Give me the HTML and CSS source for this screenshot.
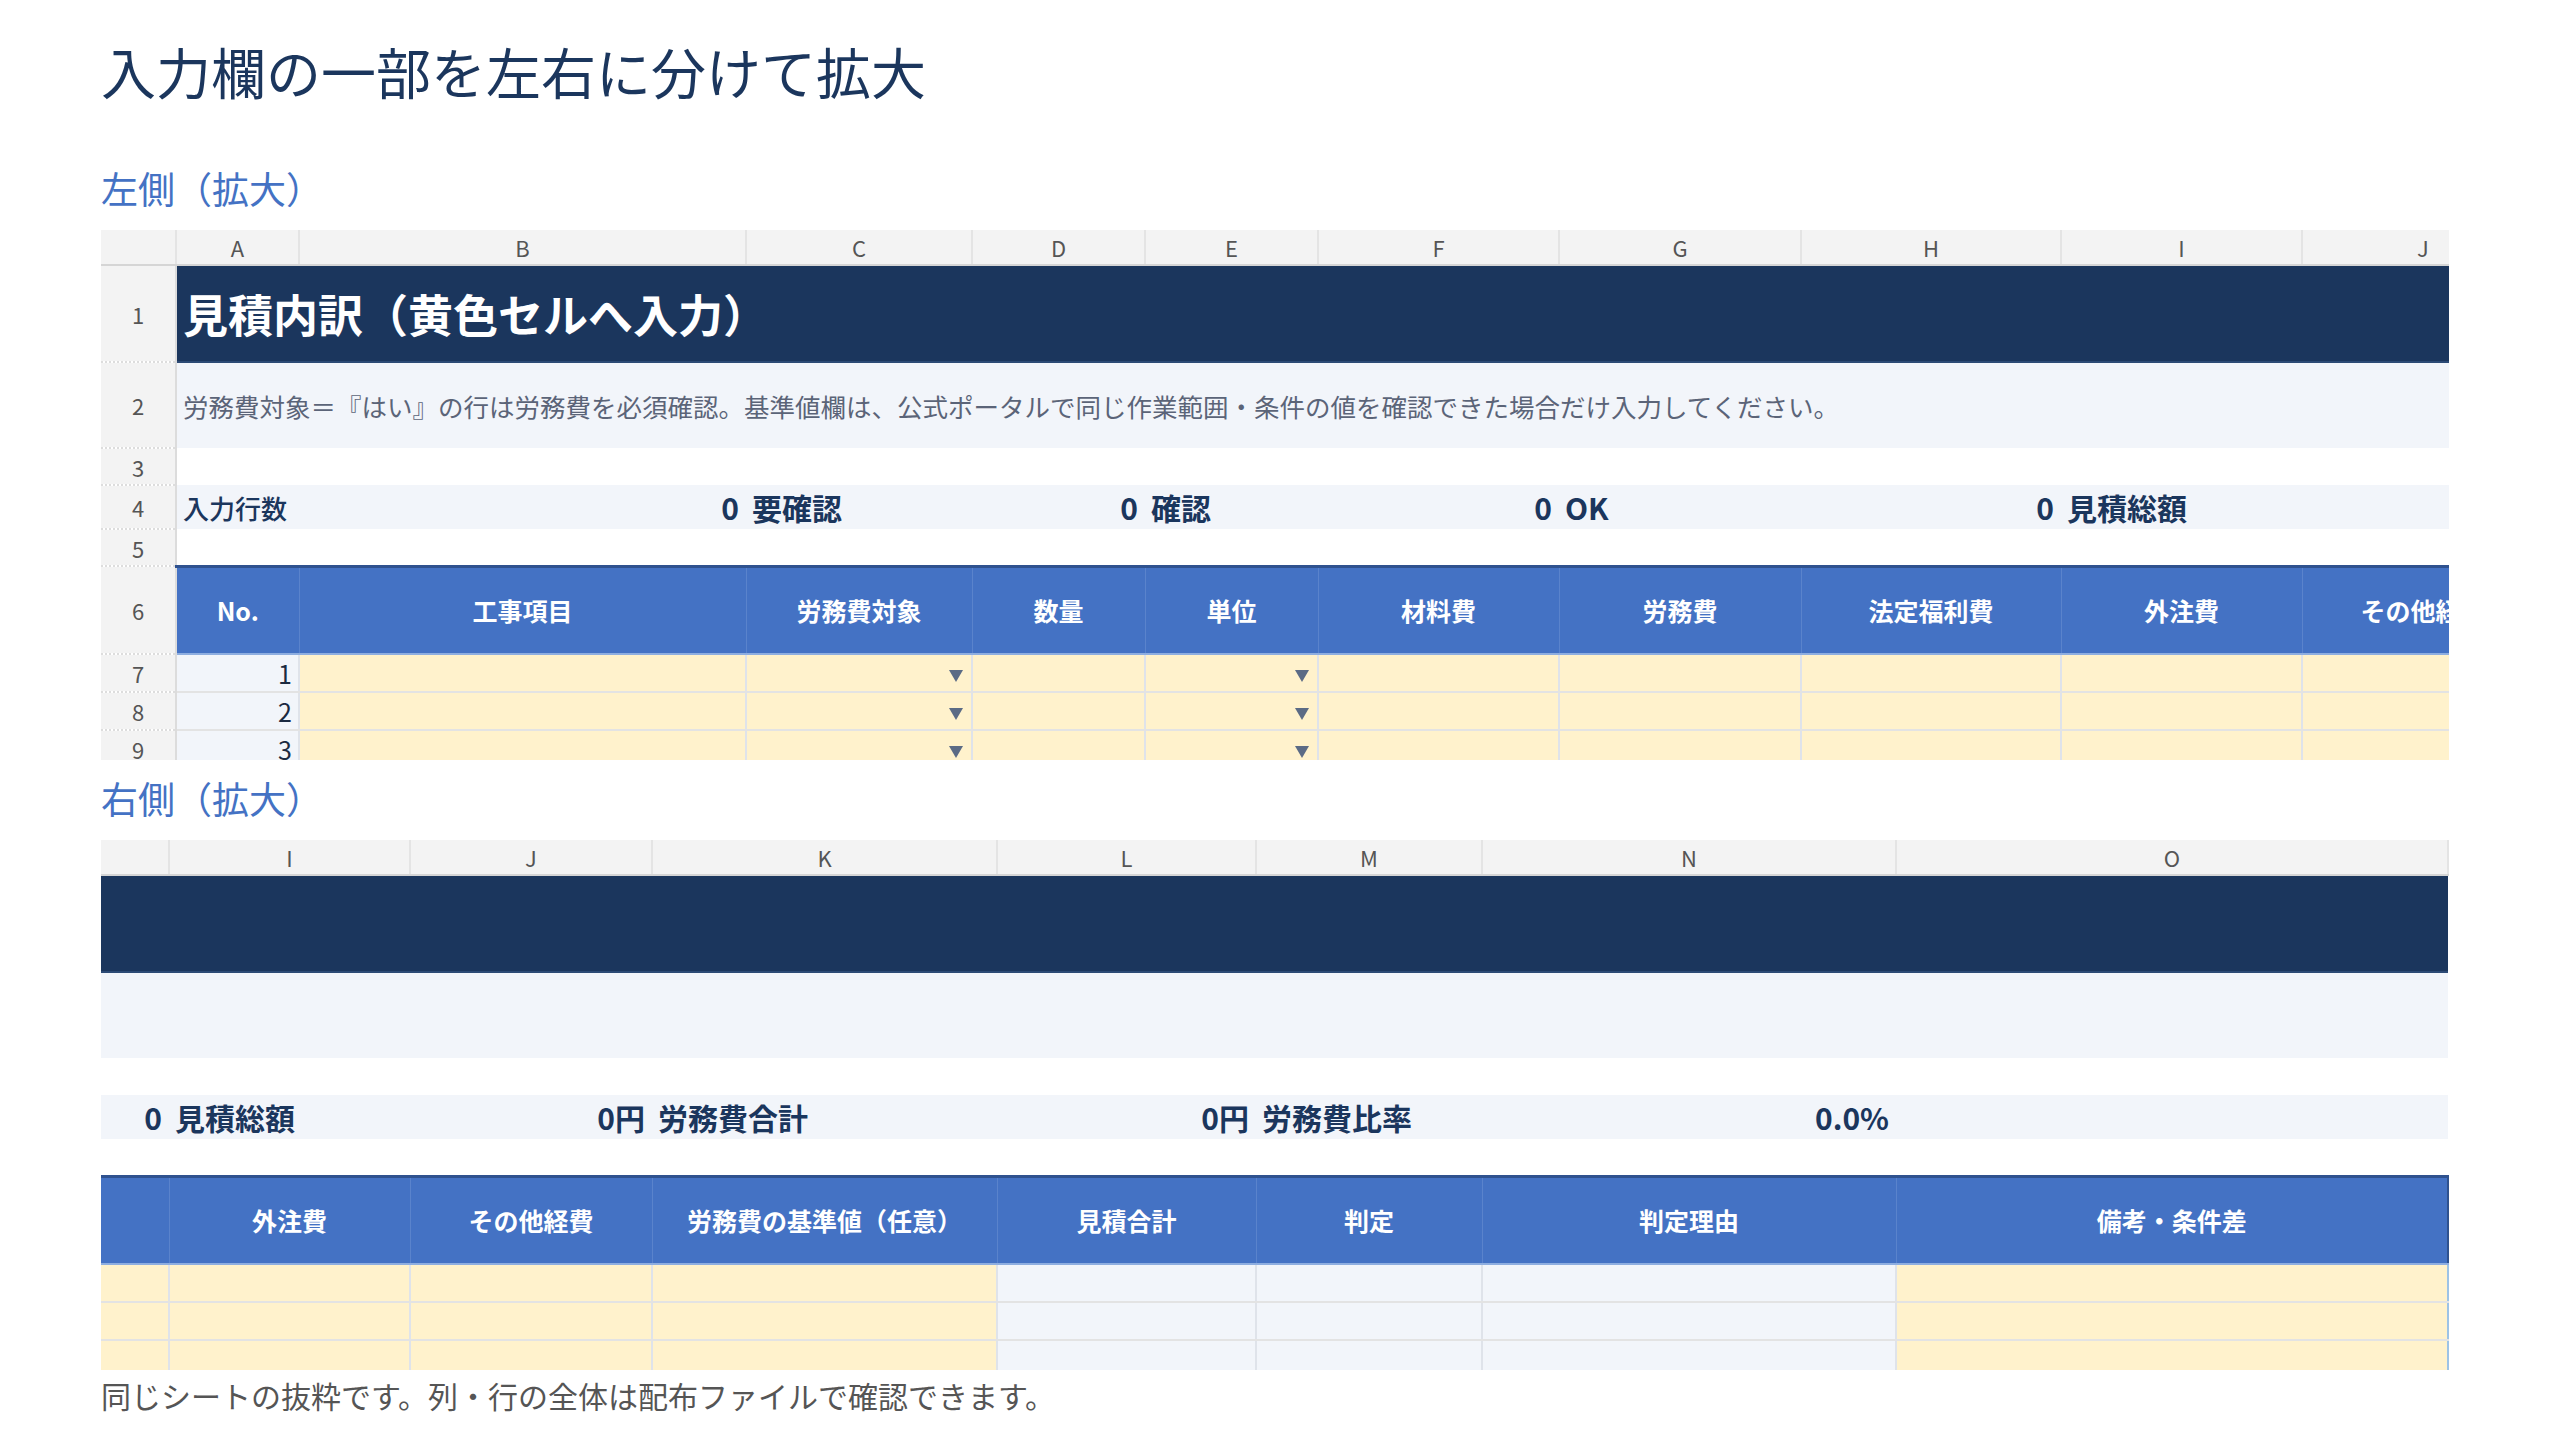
FILE: index.html
```html
<!DOCTYPE html>
<html lang="ja">
<head>
    <meta charset="UTF-8">
    <meta name="viewport" content="width=device-width, initial-scale=1.0">
    <title>入力欄の一部を左右に分けて拡大</title>
    <link rel="stylesheet" href="styles.css">
</head>
<body>
    <main class="page">
        <h1 class="page-title">入力欄の一部を左右に分けて拡大</h1>

        <section class="zoom-part">
            <h2 class="part-title">左側（拡大）</h2>
            <div class="sheet-view" id="view-left"></div>
        </section>

        <section class="zoom-part">
            <h2 class="part-title">右側（拡大）</h2>
            <div class="sheet-view" id="view-right"></div>
        </section>

        <p class="caption">同じシートの抜粋です。列・行の全体は配布ファイルで確認できます。</p>
    </main>

    <script>
        // column letter + width in px
        const COLS = [
            ['A', 123], ['B', 447], ['C', 226], ['D', 173], ['E', 173],
            ['F', 241], ['G', 242], ['H', 260], ['I', 241], ['J', 242],
            ['K', 345], ['L', 259], ['M', 226], ['N', 414], ['O', 552]
        ];
        const ROW_HEADER_WIDTH = 75;

        const NOTE = '労務費対象＝『はい』の行は労務費を必須確認。基準値欄は、公式ポータルで同じ作業範囲・条件の値を確認できた場合だけ入力してください。';

        // row 4: label / value pairs
        const SUMMARY = [
            ['入力行数', 'lead'], ['0', 'num'], ['要確認', 'label'], ['0', 'num'], ['確認', 'label'],
            ['0', 'num'], ['OK', 'label'], ['0', 'num'], ['見積総額', 'label'], ['0円', 'num'],
            ['労務費合計', 'label'], ['0円', 'num'], ['労務費比率', 'label'], ['0.0%', 'num'], ['', 'label']
        ];

        const FIELDS = [
            'No.', '工事項目', '労務費対象', '数量', '単位', '材料費', '労務費', '法定福利費',
            '外注費', 'その他経費', '労務費の基準値（任意）', '見積合計', '判定', '判定理由', '備考・条件差'
        ];

        // input = yellow entry cell, select = entry with dropdown, calc = formula result
        const KINDS = [
            'no', 'input', 'select', 'input', 'select', 'input', 'input', 'input',
            'input', 'input', 'input', 'calc', 'calc', 'calc', 'input'
        ];

        function buildSheet() {
            const span = COLS.length;
            let html = '<colgroup><col style="width:' + ROW_HEADER_WIDTH + 'px">';
            COLS.forEach(([, w]) => { html += '<col style="width:' + w + 'px">'; });
            html += '</colgroup>';

            html += '<tr class="row-letters"><th class="corner"></th>';
            COLS.forEach(([letter]) => { html += '<th class="letter">' + letter + '</th>'; });
            html += '</tr>';

            html += '<tr class="row-title"><th class="rh">1</th><td class="title" colspan="' + span + '">見積内訳（黄色セルへ入力）</td></tr>';
            html += '<tr class="row-note"><th class="rh">2</th><td class="note" colspan="' + span + '">' + NOTE + '</td></tr>';
            html += '<tr class="row-gap"><th class="rh">3</th><td colspan="' + span + '"></td></tr>';

            html += '<tr class="row-summary"><th class="rh">4</th>';
            SUMMARY.forEach(([text, kind]) => { html += '<td class="sum-' + kind + '">' + text + '</td>'; });
            html += '</tr>';

            html += '<tr class="row-gap"><th class="rh">5</th><td colspan="' + span + '"></td></tr>';

            html += '<tr class="row-fields"><th class="rh">6</th>';
            FIELDS.forEach((name, i) => {
                const last = i === FIELDS.length - 1 ? ' edge' : '';
                html += '<th class="field' + last + '">' + name + '</th>';
            });
            html += '</tr>';

            for (let n = 1; n <= 3; n++) {
                html += '<tr class="row-entry"><th class="rh">' + (n + 6) + '</th>';
                KINDS.forEach((kind, i) => {
                    const last = i === KINDS.length - 1 ? ' edge' : '';
                    let inner = '';
                    if (kind === 'no') inner = n;
                    if (kind === 'select') inner = '<span class="drop"></span>';
                    html += '<td class="cell-' + kind + last + '">' + inner + '</td>';
                });
                html += '</tr>';
            }

            const table = document.createElement('table');
            table.className = 'sheet';
            table.style.width = COLS.reduce((sum, [, w]) => sum + w, ROW_HEADER_WIDTH) + 'px';
            table.innerHTML = html;
            return table;
        }

        const left = document.getElementById('view-left');
        const right = document.getElementById('view-right');
        left.appendChild(buildSheet());
        right.appendChild(buildSheet());

        // right view shows the far end of the same sheet
        right.scrollLeft = right.scrollWidth - right.clientWidth;
    </script>
</body>
</html>
```

FILE: styles.css
```css
:root {
    --navy: #1b365d;
    --blue: #4472c4;
    --blue-dark: #2f528f;
    --pale: #f2f5fa;
    --input: #fff2cc;
    --sheet-grey: #f3f3f3;
    --grid: #e3e3e3;
    --text: #1b2a41;
    --muted: #5b6478;
}

body {
    margin: 0;
    background: #fff;
    color: var(--text);
    font-family: "Noto Sans CJK JP", "Noto Sans", sans-serif;
}

.page {
    padding: 32px 111px 0 101px;
}

.page-title {
    margin: 0;
    font-size: 55px;
    line-height: 76px;
    font-weight: 400;
    color: var(--navy);
}

.part-title {
    margin: 54px 0 16px;
    font-size: 37px;
    line-height: 52px;
    font-weight: 400;
    color: var(--blue);
}

.zoom-part + .zoom-part .part-title {
    margin: 12px 0 16px;
}

.sheet-view {
    height: 530px;
    overflow: hidden;
}

.caption {
    margin: 4px 0 0;
    font-size: 30px;
    line-height: 42px;
    color: #555;
}

/* spreadsheet */

.sheet {
    border-collapse: collapse;
    table-layout: fixed;
}

.sheet th,
.sheet td {
    padding: 0 6px;
    white-space: nowrap;
    overflow: hidden;
}

.row-letters { height: 35px; }
.row-title { height: 97px; }
.row-note { height: 86px; }
.row-gap { height: 37px; }
.row-summary { height: 37px; }
.row-fields { height: 88px; }
.row-entry { height: 38px; }

.corner,
.letter {
    background: var(--sheet-grey);
    border-right: 2px solid #e4e4e4;
    border-bottom: 2px solid #d5d5d5;
    font-size: 22px;
    font-weight: 400;
    color: #555;
    text-align: center;
}

.rh {
    background: var(--sheet-grey);
    border-right: 2px solid #dcdcdc;
    border-bottom: 2px dotted #dddddd;
    font-size: 22px;
    font-weight: 400;
    color: #555;
    text-align: center;
}

.title {
    background: var(--navy);
    color: #fff;
    font-size: 45px;
    font-weight: 700;
    border-bottom: 2px solid #2c4a75;
}

.note {
    background: var(--pale);
    color: var(--muted);
    font-size: 25.5px;
}

.row-summary td {
    background: var(--pale);
    color: var(--navy);
    font-size: 30px;
    font-weight: 700;
}

.row-summary .sum-lead {
    font-size: 26px;
    font-weight: 500;
}

.row-summary .sum-num {
    text-align: right;
    padding-right: 7px;
}

.row-summary .sum-label {
    padding-left: 6px;
}

.field {
    background: var(--blue);
    color: #fff;
    font-size: 25px;
    font-weight: 700;
    text-align: center;
    border-top: 3px solid var(--blue-dark);
    border-right: 1px solid #5a83cc;
    border-bottom: 2px solid #8eaee0;
}

.field.edge {
    border-right: 2px solid var(--blue-dark);
}

.row-entry td {
    border-right: 2px solid #dfe3ea;
    border-bottom: 2px solid var(--grid);
}

.row-entry td.edge {
    border-right: 2px solid #9dc3e6;
}

.cell-no {
    background: var(--pale);
    color: var(--text);
    font-size: 25px;
    text-align: right;
    padding-right: 6px !important;
}

.cell-input {
    background: var(--input);
}

.cell-calc {
    background: var(--pale);
}

.cell-select {
    background: var(--input);
    text-align: right;
    padding-right: 8px !important;
}

/* dropdown marker in list cells */
.drop {
    display: inline-block;
    vertical-align: middle;
    width: 0;
    height: 0;
    border-left: 7px solid transparent;
    border-right: 7px solid transparent;
    border-top: 12px solid #5b6b85;
}
```
